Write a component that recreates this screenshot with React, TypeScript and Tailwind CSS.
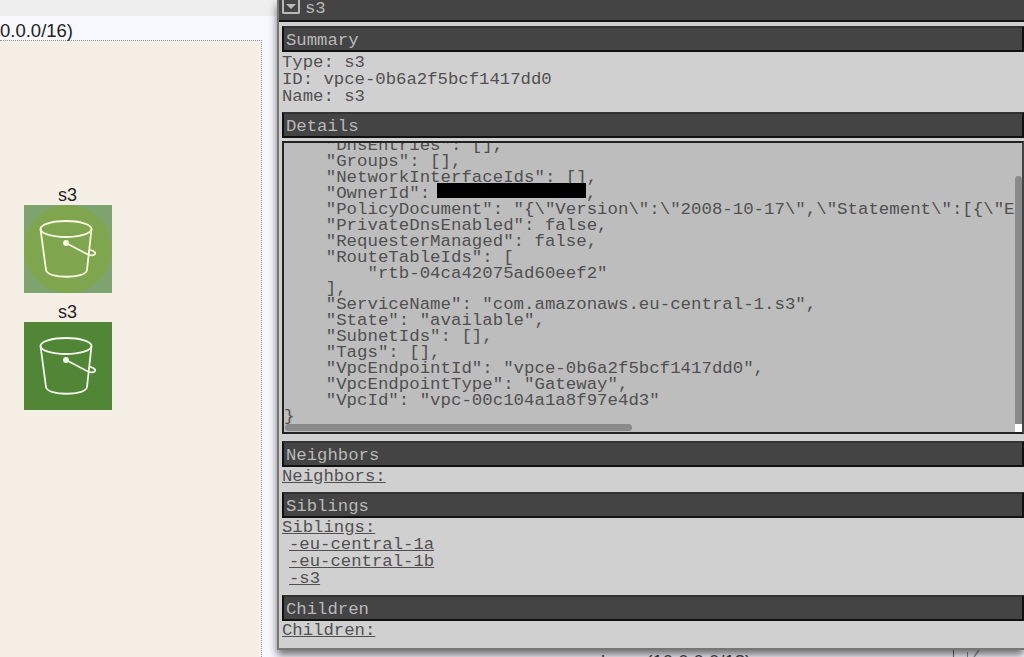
const details = `    "DnsEntries": [],
    "Groups": [],
    "NetworkInterfaceIds": [],
    "OwnerId": `;

const detailsRest = `,
    "PolicyDocument": "{\\"Version\\":\\"2008-10-17\\",\\"Statement\\":[{\\"Effect\\":\\"Allow\\"}]}",
    "PrivateDnsEnabled": false,
    "RequesterManaged": false,
    "RouteTableIds": [
        "rtb-04ca42075ad60eef2"
    ],
    "ServiceName": "com.amazonaws.eu-central-1.s3",
    "State": "available",
    "SubnetIds": [],
    "Tags": [],
    "VpcEndpointId": "vpce-0b6a2f5bcf1417dd0",
    "VpcEndpointType": "Gateway",
    "VpcId": "vpc-00c104a1a8f97e4d3"
}`;

const Bucket = () => {
  return (
    <svg viewBox="0 0 88 88" className="w-[88px] h-[88px]" fill="none" stroke="currentColor" strokeWidth="1.8">
      <ellipse cx="42" cy="24" rx="25.5" ry="8" />
      <path d="M16.5 24 L22 65 C23 74 62 74 63 65 L67.5 24" />
      <circle cx="42" cy="38" r="2" fill="currentColor" />
      <path d="M42 38 L63 49 C68 51.5 72 50 71 47.5 C70 45.5 67 45 65.5 44.5" />
    </svg>
  );
};

const Heading = (props: any) => {
  return (
    <h2 className={`h-[26px] border-2 border-[#111] border-t-[#333] bg-[#444] pl-[2px] text-[17.3px] leading-[25px] text-[#b9b9b9] ${props.className}`}>
      {props.children}
    </h2>
  );
};

export default function App() {
  return (
    <div className="relative h-[657px] w-[1024px] overflow-hidden bg-[#f8f8ff] font-['Liberation_Sans',sans-serif]">
      <div className="h-4 bg-[#eeeeee]" />
      <div className="h-[24px] pt-[5px] text-[18.5px] leading-[20px] text-[#222]">0.0.0/16)</div>
      <div className="h-[617px] w-[262px] border-t border-r border-dotted border-[#8d99a8] bg-[#f6efe6] pt-[145px]">
        <div className="w-[135px]">
          <div className="text-center text-[18px] leading-[19px] text-[#222]">s3</div>
          <div className="relative ml-6 flex h-[88px] w-[88px] items-center justify-center overflow-hidden bg-[#7fa36f] text-[#fbfbe4]">
            <div className="absolute h-[88px] w-[88px] rounded-full bg-[#7fa64f]" />
            <div className="relative"><Bucket /></div>
          </div>
          <div className="mt-[10px] text-center text-[18px] leading-[19px] text-[#222]">s3</div>
          <div className="ml-6 h-[88px] w-[88px] bg-[#508636] text-[#f4f7ee]">
            <Bucket />
          </div>
        </div>
      </div>

      {/* bits of the diagram showing below the panel */}
      <div className="absolute left-[601px] top-[652px] text-[18.5px] leading-[20px] text-[#444]">base (10.0.0.0/18)</div>
      <div className="absolute left-[953px] top-[650px] h-[7px] w-px bg-[#666]" />
      <div className="absolute left-[967px] top-[652px] h-[5px] w-px bg-[#888]" />
      <svg className="absolute left-[972px] top-[650px] w-[8px] h-[7px]" viewBox="0 0 8 7" fill="none" stroke="#999" strokeWidth="1.5">
        <path d="M7 0 L2 7" />
      </svg>

      <div className="absolute left-[277px] right-0 top-0 h-[650px] border-l-2 border-b-2 border-[#777] bg-[#d0d0d0] font-['Liberation_Mono',monospace] shadow-[0_5px_8px_rgba(0,0,0,0.55)]">
        <div className="flex h-[22px] items-start border-b-2 border-[#111] bg-[#444] pl-[3px] text-[#b9b9b9]">
          <div className="flex h-[14px] w-[18px] items-center justify-center rounded-b-[2px] border-2 border-t-0 border-[#b9b9b9]">
            <div className="h-0 w-0 border-x-[5px] border-t-[5px] border-x-transparent border-t-[#b9b9b9]" />
          </div>
          <span className="ml-[5px] text-[17.3px] leading-[17px]">s3</span>
        </div>

        <div className="pl-[3px] text-[17.3px] leading-[17px] text-[#505050]">
          <Heading className="mt-[4px]">Summary</Heading>
          <div className="pt-[2px]">
            <div>Type: s3</div>
            <div>ID: vpce-0b6a2f5bcf1417dd0</div>
            <div>Name: s3</div>
          </div>

          <Heading className="mt-[7px]">Details</Heading>
          <div className="relative mt-[3px] h-[293px] overflow-hidden border-2 border-[#222] border-r-[#444] bg-[#bdbdbd]">
            <pre className="-mt-[5px] w-[1000px] overflow-hidden font-['Liberation_Mono',monospace] text-[17.4px] leading-[15.93px] text-[#505050]">
              {details}
              <span className="-ml-[3.6px] inline-block h-[15px] w-[149px] -translate-y-[3px] bg-black align-top" />
              {detailsRest}
            </pre>
            <div className="absolute bottom-[1px] left-[1px] h-[7px] w-[347px] rounded-full bg-[#8a8a8a]" />
            <div className="absolute right-0 top-[33px] h-[251px] w-[7px] rounded-t-full bg-[#8a8a8a]" />
            <div className="absolute right-0 top-0 h-[33px] w-[8px] bg-[#bdbdbd]" />
            <div className="absolute bottom-0 right-0 h-[8px] w-[7px] bg-white" />
          </div>

          <Heading className="mt-[7px]">Neighbors</Heading>
          <div className="h-[24px] pt-[1px] underline">Neighbors:</div>

          <Heading className="mt-[1px]">Siblings</Heading>
          <div className="h-[77px] pt-[1px]">
            <div className="underline">Siblings:</div>
            <div className="ml-[7px] underline">-eu-central-1a</div>
            <div className="ml-[7px] underline">-eu-central-1b</div>
            <div className="ml-[7px] underline">-s3</div>
          </div>

          <Heading>Children</Heading>
          <div className="pt-[1px] underline">Children:</div>
        </div>
      </div>
    </div>
  );
}
